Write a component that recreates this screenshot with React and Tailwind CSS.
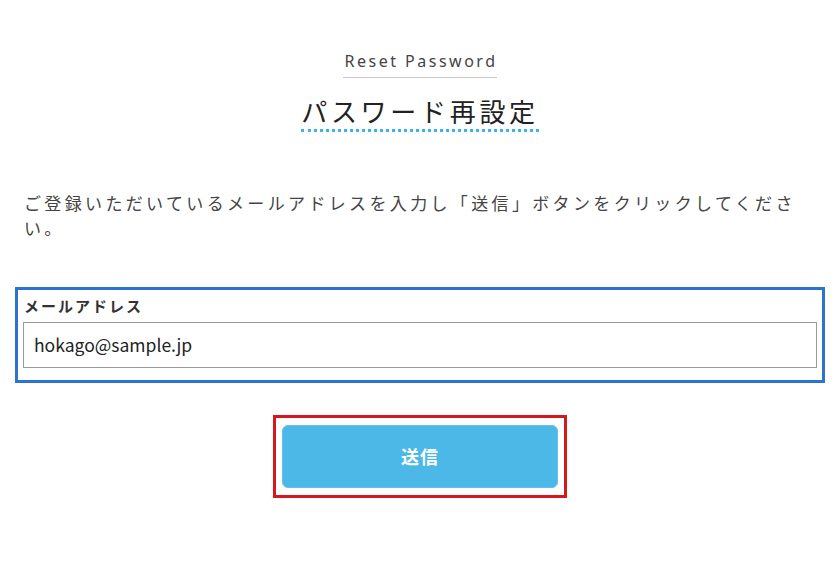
export default function App() {
    return (
        <div className="w-[840px] h-[577px] bg-white text-[#333] overflow-hidden" style={{ fontFamily: '"Noto Sans CJK JP", "Noto Sans", sans-serif' }}>
            {/* Heading */}
            <div className="flex flex-col items-center pt-[50px]">
                <p className="text-[16px] leading-[22px] tracking-[2.5px] text-[#444] pb-[5px] border-b border-[#c8c8c8] pl-[2px]" style={{ fontFamily: '"Noto Sans", sans-serif' }}>
                    Reset Password
                </p>
                <h1 className="mt-[18px] text-[26px] leading-[30px] tracking-[3.7px] text-[#222] pb-[3px] border-b-[3px] border-dotted border-[#3ab3ea]">
                    パスワード再設定
                </h1>
            </div>

            {/* Lead */}
            <p className="mt-[58px] ml-[24px] w-[796px] text-[17px] leading-[25px] tracking-[3.35px] text-[#444]">
                ご登録いただいているメールアドレスを入力し「送信」ボタンをクリックしてください。
            </p>

            {/* Field */}
            <div className="mx-[15px] mt-[47px] border-[3px] border-[#2b73d1] px-[5px] pt-[4px] pb-[12px]">
                <label className="block ml-[1px] text-[15px] leading-[24px] font-bold tracking-[2px] text-[#333]">
                    メールアドレス
                </label>
                <div className="mt-[4px] h-[46px] border border-[#9a9a9a] flex items-center px-[10px] text-[17.5px] text-[#222]">
                    hokago@sample.jp
                </div>
            </div>

            {/* Submit */}
            <div className="flex justify-center mt-[32px]">
                <div className="w-[294px] border-[3px] border-[#d5181b] px-[6px] pt-[7px] pb-[7px]">
                    <button className="w-full h-[63px] rounded-[6px] bg-[#4bb8e8] border border-[#62c2ec] text-white text-[18px] font-bold tracking-[1px]">
                        送信
                    </button>
                </div>
            </div>
        </div>
    );
}
